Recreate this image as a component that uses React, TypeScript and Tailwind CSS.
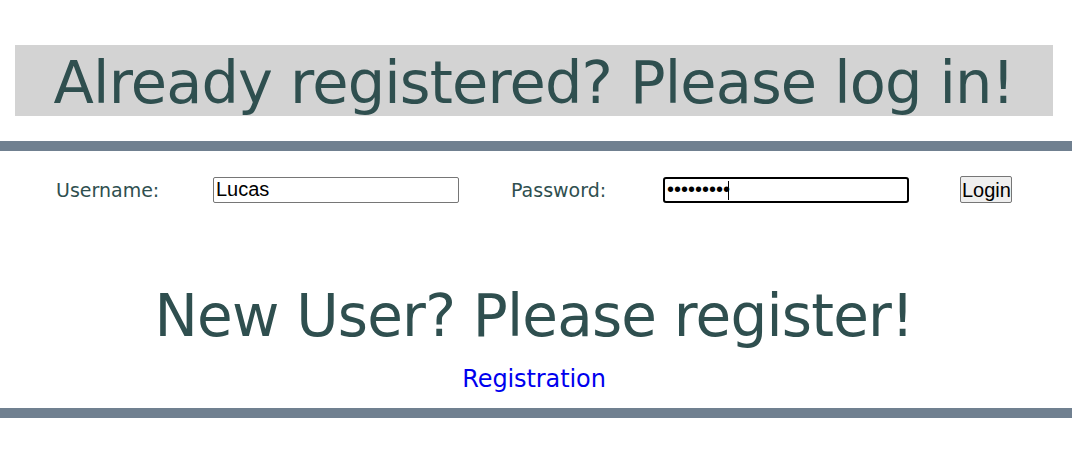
import React from "react";

export default function App() {
  const dejavu = { fontFamily: '"DejaVu Sans", Verdana, sans-serif' };
  return (
    <div className="w-[1072px] h-[457px] bg-white overflow-hidden flex flex-col" style={dejavu}>
      {/* Header box */}
      <div className="mt-[45px] ml-[15px] w-[1038px] h-[71px] bg-[#d3d3d3] pt-[5px] box-border">
        <h1 className="m-0 text-center text-[59px] leading-[66px] tracking-[-0.85px] font-normal text-[#2f4f4f] whitespace-nowrap">
          Already registered? Please log in!
        </h1>
      </div>

      {/* Bar */}
      <div className="mt-[25px] h-[10px] w-full bg-[#708090]" />

      {/* Login form row */}
      <form
        className="mt-[25px] h-[27px] flex items-center"
        onSubmit={(e) => e.preventDefault()}
      >
        <label className="ml-[56px] w-[157px] text-[19px] leading-[22px] text-[#2f4f4f] whitespace-nowrap">
          Username:
        </label>
        <input
          type="text"
          defaultValue="Lucas"
          className="w-[246px] h-[26px] box-border border border-[#767676] rounded-[2px] px-[2px] py-[1px] text-[20px] leading-[22px] text-black bg-white outline-none"
          style={{ fontFamily: '"Liberation Sans", Arial, sans-serif' }}
        />
        <label className="ml-[52px] w-[152px] text-[19px] leading-[22px] text-[#2f4f4f] whitespace-nowrap">
          Password:
        </label>
        <div className="relative w-[246px] h-[26px]">
          <input
            type="password"
            defaultValue="123456789"
            className="w-[246px] h-[26px] box-border border-2 border-black rounded-[3px] px-[2px] py-0 text-[20px] leading-[22px] text-black bg-white outline-none caret-transparent"
            style={{ fontFamily: '"Liberation Sans", Arial, sans-serif' }}
          />
          <span className="absolute left-[65px] top-[4px] w-[1px] h-[19px] bg-black" />
        </div>
        <button
          type="submit"
          className="ml-[51px] w-[52px] h-[27px] box-border border border-[#767676] rounded-[2px] bg-[#efefef] px-[1px] py-0 text-[20px] leading-[22px] text-black"
          style={{ fontFamily: '"Liberation Sans", Arial, sans-serif' }}
        >
          Login
        </button>
      </form>

      {/* Register section */}
      <div className="w-[1068px] flex flex-col items-center">
        <h2 className="mt-[79px] m-0 text-[58px] leading-[68px] tracking-[-0.8px] font-normal text-[#2f4f4f] whitespace-nowrap">
          New User? Please register!
        </h2>
        <a
          href="#"
          className="mt-[15px] text-[24px] leading-[28px] tracking-[-0.1px] text-[#0000ee] no-underline whitespace-nowrap"
        >
          Registration
        </a>
      </div>

      {/* Bar */}
      <div className="mt-[15px] h-[10px] w-full bg-[#708090]" />
    </div>
  );
}
